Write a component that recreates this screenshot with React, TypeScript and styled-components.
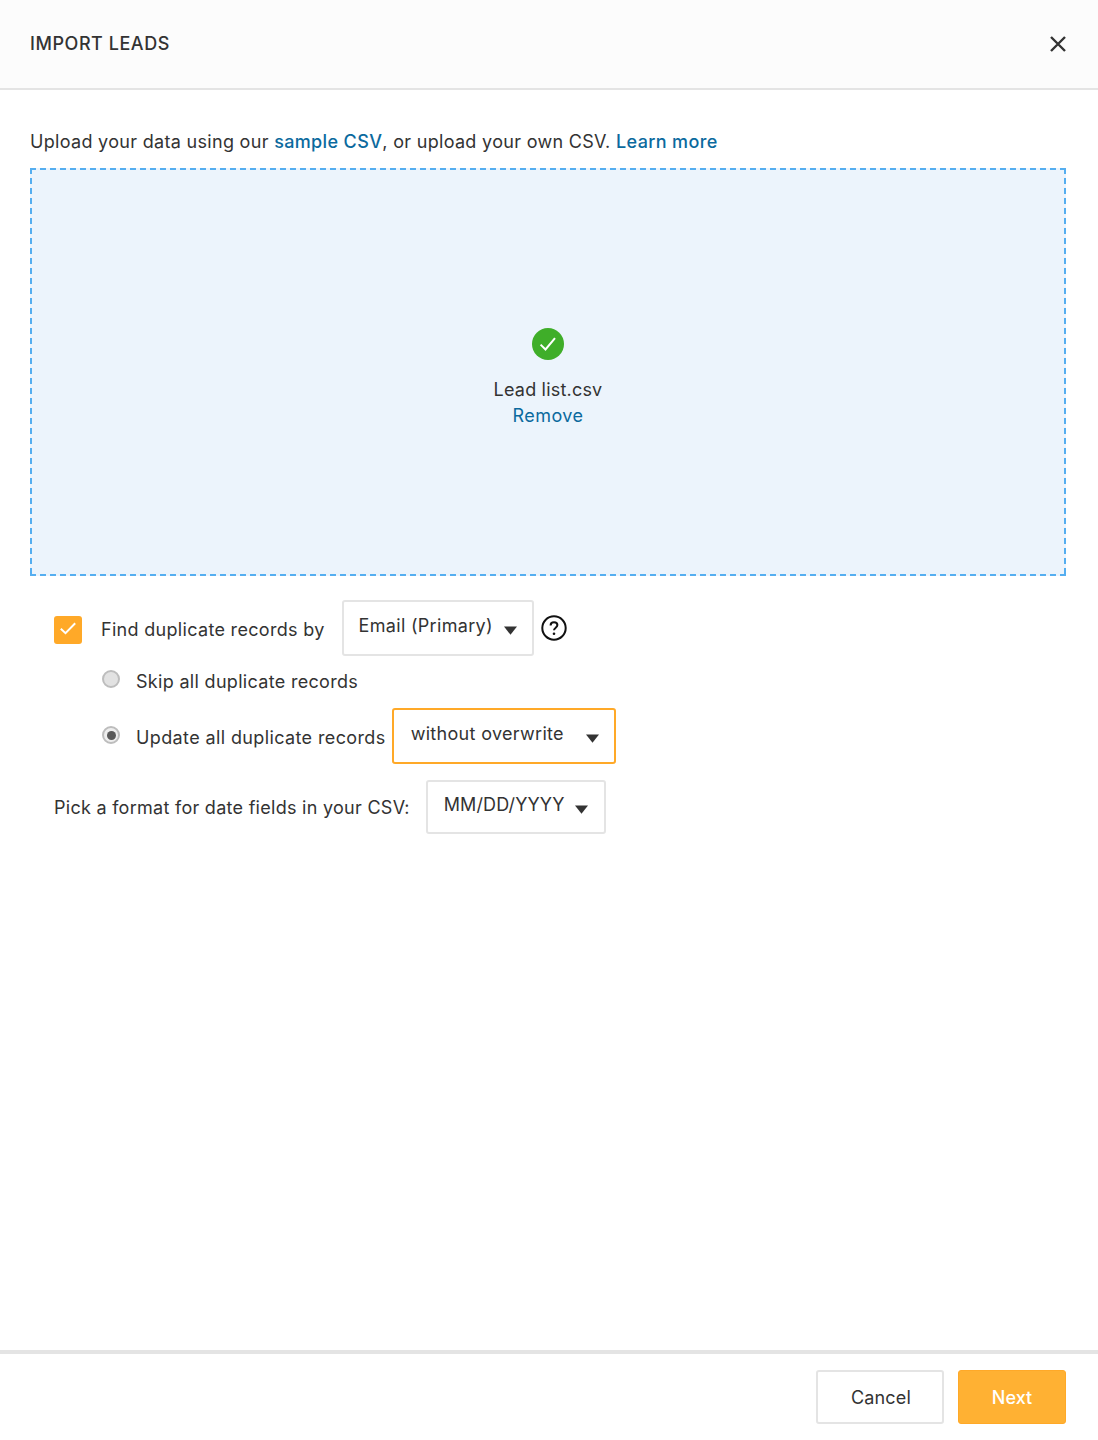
import React from "react";
import styled, { createGlobalStyle } from "styled-components";

const GlobalStyle = createGlobalStyle`
  html, body {
    margin: 0;
    padding: 0;
    background: #fff;
    font-family: Inter, "Liberation Sans", sans-serif;
    letter-spacing: 0.31px;
    color: #333;
  }
  * {
    box-sizing: border-box;
  }
`;

const Caret = () => (
  <CaretIcon viewBox="0 0 13 9">
    <path d="M0 0.5h13L6.5 8.8z" fill="#333" />
  </CaretIcon>
);

const App: React.FC = () => {
  return (
    <Page>
      <GlobalStyle />
      <Header>
        <Title>IMPORT LEADS</Title>
        <CloseIcon viewBox="0 0 16 16">
          <path d="M1 1l14 14M15 1L1 15" stroke="#333" strokeWidth="2.4" fill="none" />
        </CloseIcon>
      </Header>
      <Main>
        <Intro>
          Upload your data using our <Link>sample CSV</Link>, or upload your own CSV.{" "}
          <Link>Learn more</Link>
        </Intro>
        <DropZone>
          <SuccessIcon viewBox="0 0 32 32">
            <circle cx="16" cy="16" r="16" fill="#3fae29" />
            <path d="M8.6 16.6l4.9 4.9L23 10.2" stroke="#fff" strokeWidth="2" fill="none" />
          </SuccessIcon>
          <FileName>Lead list.csv</FileName>
          <RemoveLink>Remove</RemoveLink>
        </DropZone>
        <Options>
          <Row>
            <CheckBox>
              <svg viewBox="0 0 16 16" width="16" height="16">
                <path d="M0.8 6.8L5.5 11.2 15.2 1.2" stroke="#fff" strokeWidth="2" fill="none" />
              </svg>
            </CheckBox>
            <FindLabel>Find duplicate records by</FindLabel>
            <Select $width={192} $height={56} $gap={11} $pad={15}>
              <span>Email (Primary)</span>
              <Caret />
            </Select>
            <HelpIcon viewBox="0 0 26 26">
              <circle cx="13" cy="13" r="11.7" fill="none" stroke="#111" strokeWidth="2" />
              <path
                d="M9.6 10.4c0-2 1.5-3.2 3.4-3.2s3.4 1.2 3.4 2.9c0 2.6-3.4 2.6-3.4 5.2"
                fill="none"
                stroke="#111"
                strokeWidth="2"
              />
              <circle cx="13" cy="18.8" r="1.3" fill="#111" />
            </HelpIcon>
          </Row>
          <SkipRow>
            <RadioChoice>
              <Radio />
              <Label>Skip all duplicate records</Label>
            </RadioChoice>
          </SkipRow>
          <UpdateRow>
            <RadioChoice $drop>
              <Radio $checked />
              <UpdateLabel>Update all duplicate records</UpdateLabel>
            </RadioChoice>
            <ModeSelect $width={224} $height={56} $gap={22} $pad={17} $active>
              <span>without overwrite</span>
              <Caret />
            </ModeSelect>
          </UpdateRow>
          <DateRow>
            <DateLabel>Pick a format for date fields in your CSV:</DateLabel>
            <Select $width={180} $height={54} $gap={11} $pad={16}>
              <DateValue>MM/DD/YYYY</DateValue>
              <Caret />
            </Select>
          </DateRow>
        </Options>
      </Main>
      <Footer>
        <CancelButton>Cancel</CancelButton>
        <NextButton>Next</NextButton>
      </Footer>
    </Page>
  );
};

export default App;

const Page = styled.div`
  display: flex;
  flex-direction: column;
  width: 100%;
  height: 1440px;
  overflow: hidden;
`;

const Header = styled.header`
  display: flex;
  align-items: center;
  justify-content: space-between;
  height: 90px;
  padding: 0 32px 2px 30px;
  background: #fcfcfc;
  border-bottom: 2px solid #e4e4e4;
`;

const Title = styled.h1`
  margin: 0;
  font-size: 18px;
  font-weight: 500;
  letter-spacing: 0.55px;
  color: #333;
`;

const CloseIcon = styled.svg`
  width: 16px;
  height: 16px;
  margin-top: 2px;
`;

const Main = styled.main`
  flex: 1;
  padding: 40px 32px 0 30px;
`;

const Intro = styled.p`
  margin: 0 0 14px;
  font-size: 18px;
  line-height: 24px;
`;

const Link = styled.a`
  color: #0b6a9e;
  font-weight: 500;
  letter-spacing: 0.36px;
`;

const RemoveLink = styled(Link)`
  font-weight: 400;
  letter-spacing: 0.42px;
`;

const DropZone = styled.div`
  display: flex;
  flex-direction: column;
  align-items: center;
  justify-content: center;
  height: 408px;
  padding-top: 12px;
  font-size: 18px;
  line-height: 26px;
  background-color: #ecf4fc;
  background-image:
    linear-gradient(90deg, #55aef0 6px, transparent 6px),
    linear-gradient(90deg, #55aef0 6px, transparent 6px),
    linear-gradient(#55aef0 6px, transparent 6px),
    linear-gradient(#55aef0 6px, transparent 6px);
  background-size:
    10px 2px,
    10px 2px,
    2px 10px,
    2px 10px;
  background-position:
    0 0,
    0 100%,
    0 0,
    100% 0;
  background-repeat: repeat-x, repeat-x, repeat-y, repeat-y;
`;

const SuccessIcon = styled.svg`
  width: 32px;
  height: 32px;
  margin-bottom: 17px;
`;

const FileName = styled.div`
  color: #333;
  letter-spacing: 0.2px;
`;

const Options = styled.div`
  display: flex;
  flex-direction: column;
  padding: 24px 0 0 24px;
`;

const Row = styled.div`
  display: flex;
  align-items: center;
  height: 56px;
`;

const SkipRow = styled.div`
  display: flex;
  align-items: center;
  height: 52px;
  padding-left: 48px;
`;

const UpdateRow = styled.div`
  display: flex;
  align-items: center;
  height: 56px;
  padding-left: 48px;
`;

const RadioChoice = styled.div<{ $drop?: boolean }>`
  display: flex;
  align-items: center;
  gap: 16px;
  margin-top: ${(p) => (p.$drop ? "4px" : "0")};
`;

const DateRow = styled.div`
  display: flex;
  align-items: center;
  gap: 16px;
  margin-top: 16px;
`;

const CheckBox = styled.span`
  display: flex;
  align-items: center;
  justify-content: center;
  width: 28px;
  height: 28px;
  margin: 4px 19px 0 0;
  border-radius: 3px;
  background: #ffa928;
`;

const Label = styled.span`
  font-size: 18px;
  line-height: 24px;
  white-space: nowrap;
  color: #333;
`;

const FindLabel = styled(Label)`
  margin: 4px 17px 0 0;
`;

const UpdateLabel = styled(Label)`
  letter-spacing: 0.38px;
`;

const DateLabel = styled(Label)`
  margin-top: 2px;
  letter-spacing: 0.28px;
`;

const DateValue = styled.span`
  letter-spacing: 0.11px;
`;

const Select = styled.div<{
  $width: number;
  $height: number;
  $gap: number;
  $pad: number;
  $active?: boolean;
}>`
  display: flex;
  align-items: center;
  flex: none;
  gap: ${(p) => p.$gap}px;
  width: ${(p) => p.$width}px;
  height: ${(p) => p.$height}px;
  padding: 0 0 5px ${(p) => p.$pad}px;
  border: 2px solid ${(p) => (p.$active ? "#ffa928" : "#e4e4e4")};
  border-radius: 3px;
  font-size: 18px;
  color: #333;
  white-space: nowrap;
`;

const ModeSelect = styled(Select)`
  margin-left: 6px;
`;

const CaretIcon = styled.svg`
  width: 13px;
  height: 9px;
  flex: none;
  margin-top: 9px;
`;

const HelpIcon = styled.svg`
  width: 26px;
  height: 26px;
  margin-left: 7px;
`;

const Radio = styled.span<{ $checked?: boolean }>`
  position: relative;
  flex: none;
  width: 18px;
  height: 18px;
  margin-top: -6px;
  border-radius: 50%;
  background: ${(p) => (p.$checked ? "#eeeeee" : "#e2e2e2")};
  border: 2px solid #bdbdbd;

  &::after {
    content: "";
    display: ${(p) => (p.$checked ? "block" : "none")};
    position: absolute;
    top: 2.5px;
    left: 2.5px;
    width: 9px;
    height: 9px;
    border-radius: 50%;
    background: #5a5a5a;
  }
`;

const Footer = styled.footer`
  display: flex;
  justify-content: flex-end;
  gap: 14px;
  height: 90px;
  padding: 16px 32px 0 0;
  border-top: 4px solid #e4e4e4;
`;

const CancelButton = styled.button`
  width: 128px;
  height: 54px;
  padding: 0 0 0 2px;
  font-family: inherit;
  font-size: 18px;
  letter-spacing: 0.15px;
  color: #333;
  background: #fff;
  border: 2px solid #e4e4e4;
  border-radius: 3px;
`;

const NextButton = styled.button`
  width: 108px;
  height: 54px;
  font-family: inherit;
  font-size: 18px;
  font-weight: 500;
  letter-spacing: 0;
  color: #fff;
  background: #ffb133;
  border: 1px solid #ffa928;
  border-radius: 3px;
`;
